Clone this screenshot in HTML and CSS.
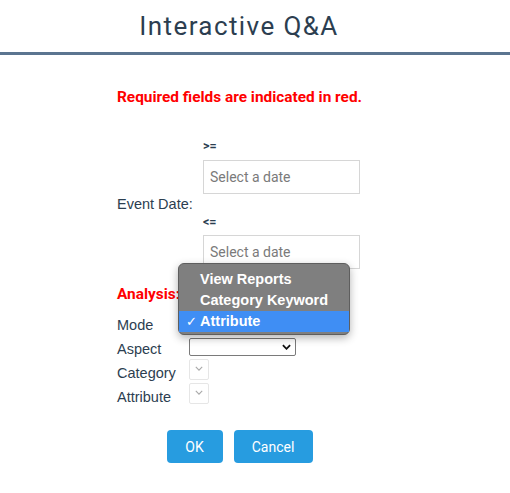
FILE: index.html
```
<!DOCTYPE html>
<html lang="en">
<head>
    <meta charset="UTF-8">
    <title>Interactive Q&amp;A</title>
    <link rel="stylesheet" href="styles.css">
</head>
<body>
    <header class="top">
        <h1>Interactive Q&amp;A</h1>
    </header>
    <main class="form">
        <p class="required">Required fields are indicated in red.</p>
        <div class="dates">
            <div class="dates-label">Event Date:</div>
            <div class="dates-fields">
                <div class="op">&gt;=</div>
                <input class="date" type="text" placeholder="Select a date">
                <div class="op">&lt;=</div>
                <input class="date" type="text" placeholder="Select a date">
            </div>
        </div>
        <p class="required analysis">Analysis:</p>
        <div class="grid">
            <div class="lbl">Mode</div>
            <div class="cell"><span class="sel wide"><select></select><svg viewBox="0 0 10 6"><path d="M1 1l4 4 4-4" fill="none" stroke="#111" stroke-width="2"/></svg></span></div>
            <div class="lbl">Aspect</div>
            <div class="cell"><span class="sel wide"><select></select><svg viewBox="0 0 10 6"><path d="M1 1l4 4 4-4" fill="none" stroke="#111" stroke-width="2"/></svg></span></div>
            <div class="lbl">Category</div>
            <div class="cell"><span class="sel small"><select disabled></select><svg viewBox="0 0 10 6"><path d="M1 1l4 4 4-4" fill="none" stroke="#a9a9a9" stroke-width="1.4"/></svg></span></div>
            <div class="lbl">Attribute</div>
            <div class="cell"><span class="sel small"><select disabled></select><svg viewBox="0 0 10 6"><path d="M1 1l4 4 4-4" fill="none" stroke="#a9a9a9" stroke-width="1.4"/></svg></span></div>
        </div>
        <div class="actions">
            <button class="btn ok">OK</button>
            <button class="btn cancel">Cancel</button>
        </div>
    </main>
    <ul class="popup">
        <li>View Reports</li>
        <li>Category Keyword</li>
        <li class="on"><span class="check">&#10003;</span>Attribute</li>
    </ul>
</body>
</html>
```

FILE: styles.css
```
*{ margin: 0; padding: 0; list-style: none; box-sizing: border-box}
body{
    background: #fff;
    color: #2c3e50;
    font-family: "Liberation Sans", Arial, sans-serif;
    font-size: 14.5px;
}
.top{
    border-bottom: 3px solid #5b7590;
}
.top h1{
    height: 52px;
    line-height: 52px;
    padding-right: 32px;
    text-align: center;
    font-family: Roboto, sans-serif;
    font-weight: 400;
    font-size: 26px;
    letter-spacing: 1.4px;
    color: #2c3e50;
}
.form{
    width: 362px;
    padding-left: 117px;
}
.required{
    font-family: Roboto, sans-serif;
    font-weight: 700;
    font-size: 15.4px;
    line-height: 20px;
    color: #ff0000;
    white-space: nowrap;
    margin-top: 32px;
}
.dates{
    display: grid;
    grid-template-columns: 86px auto;
    align-items: center;
    margin-top: 31px;
}
.dates-fields{
    display: flex;
    flex-direction: column;
    align-items: flex-start;
}
.op{
    font-family: Roboto, sans-serif;
    font-weight: 700;
    font-size: 12.5px;
    line-height: 16px;
    margin-bottom: 6px;
}
.date + .op{
    margin-top: 20px;
    margin-bottom: 5px;
}
.date{
    width: 157px;
    height: 34px;
    border: 1px solid #d6d6d6;
    padding-left: 6px;
    font-family: Roboto, sans-serif;
    font-size: 14px;
    outline: none;
}
.date::placeholder{
    color: #7a7a7a;
}
.analysis{
    margin-top: 15px;
}
.grid{
    display: grid;
    grid-template-columns: 72px auto;
    grid-auto-rows: 24px;
    margin-top: 9px;
}
.lbl{
    line-height: 24px;
}
.cell{
    display: flex;
    align-items: flex-start;
}
.sel{
    position: relative;
    display: block;
}
.sel select{
    -webkit-appearance: none;
    appearance: none;
    display: block;
    width: 100%;
    height: 100%;
    background: #fff;
}
.sel svg{
    position: absolute;
    top: 50%;
}
.wide{
    width: 107px;
    height: 18px;
    margin-top: 1px;
}
.wide select{
    border: 1px solid #7a7a7a;
    border-radius: 2px;
}
.wide svg{
    right: 5px;
    width: 9px;
    height: 6px;
    margin-top: -3px;
}
.small{
    width: 20px;
    height: 21px;
    margin-top: -2px;
}
.small select{
    border: 1px solid #dcdcdc;
    border-radius: 2px;
}
.small svg{
    left: 6px;
    width: 8px;
    height: 5px;
    margin-top: -4px;
}
.actions{
    display: flex;
    justify-content: center;
    gap: 11px;
    margin-top: 21px;
}
.btn{
    height: 33px;
    border: none;
    border-radius: 4px;
    background: #279ce0;
    color: #fff;
    font-family: Roboto, sans-serif;
    font-size: 14px;
}
.ok{
    width: 56px;
}
.cancel{
    width: 79px;
}
.popup{
    position: absolute;
    left: 178px;
    top: 263px;
    width: 172px;
    height: 72px;
    padding-top: 5px;
    background: #7f7f7f;
    border: 1px solid #5e5e5e;
    border-radius: 6px;
    box-shadow: 0 3px 8px rgba(0,0,0,.3);
    color: #fff;
    font-family: "Liberation Sans", Arial, sans-serif;
    font-weight: 700;
    font-size: 14.5px;
}
.popup li{
    height: 21px;
    line-height: 21px;
    padding-left: 21px;
    position: relative;
}
.popup .on{
    background: #3f8ef4;
}
.check{
    position: absolute;
    left: 7px;
    top: 0;
    font-family: "DejaVu Sans", sans-serif;
    font-weight: 400;
    font-size: 13px;
}
```
